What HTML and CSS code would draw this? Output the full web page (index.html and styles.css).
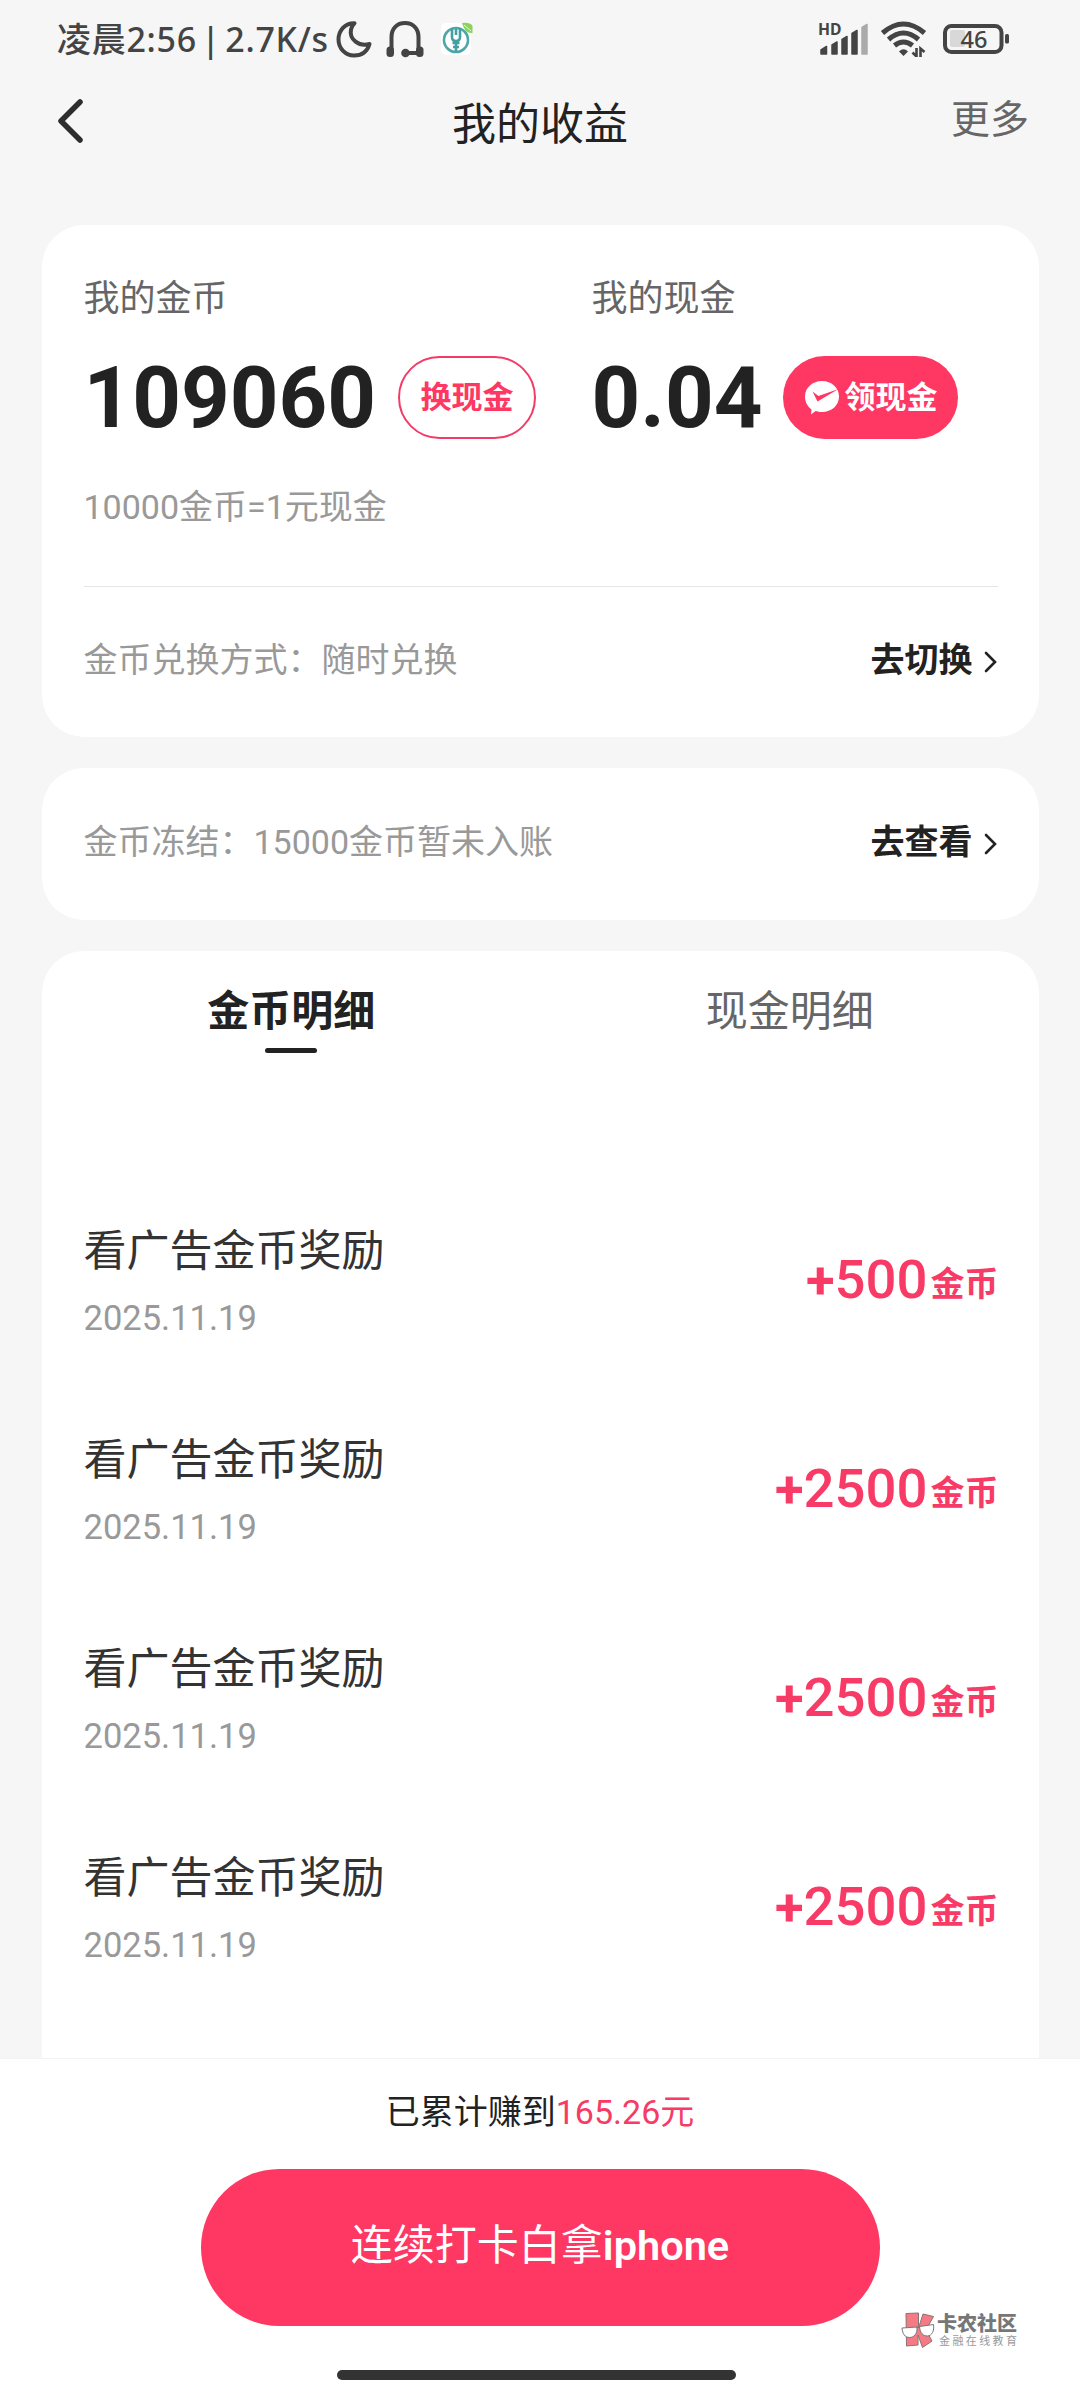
FILE: index.html
```html
<!DOCTYPE html>
<html lang="zh-CN">
<head>
<meta charset="utf-8">
<title>我的收益</title>
<link rel="stylesheet" href="styles.css">
</head>
<body>
<div class="screen">
  <div class="status">
    <span class="status-time">凌晨2:56 | 2.7K/s</span>
    <svg class="moon" width="36" height="38" viewBox="0 0 36 38"><path d="M18.500 3.200C9 3 2.500 10.500 2.500 19.500C2.500 28.500 9.500 35.500 18 35.500C26 35.500 31.500 31 33.500 24C23 27 13 19.500 15 9.500C15.500 7 16.500 5 18.500 3.200Z"/></svg>
    <svg class="headset" width="38" height="38" viewBox="0 0 38 38"><path class="line" d="M5.500 29V17C5.500 8.500 11 3 19 3S32.500 8.500 32.500 17V29M20 33H32"/><rect x="0.500" y="26.500" width="7.500" height="10.500" rx="3.500"/><rect x="30" y="26.500" width="7.500" height="10.500" rx="3.500"/><circle cx="19.500" cy="33" r="4.300"/></svg>
    <svg class="app" width="32" height="34" viewBox="0 0 32 34"><rect x="0" y="1" width="30" height="32" rx="5" fill="#fff"/><circle cx="15" cy="18" r="12" fill="none" stroke="#4fa7a8" stroke-width="2.600"/><path d="M15 19V30M11 6V15Q11 19 15 19Q19 19 19 15V6M15 7V13M11.500 21H18.500M12 25H18" fill="none" stroke="#459fa2" stroke-width="2.600"/><path d="M21 1Q29 0 31.500 4V11Q24 12 21 1Z" fill="#8bd35c"/><path d="M23 3L30 9" stroke="#e8f8dc" stroke-width="1"/></svg>
    <span class="status-gap"></span>
    <svg class="signal" width="53" height="52" viewBox="-1 -9 53 52"><text x="0" y="12.500" font-size="16" textLength="23.500" lengthAdjust="spacingAndGlyphs">HD</text><path d="M3 28L8.500 24.500V32H3ZM14 23L19 20V32H14ZM24 17.500L29 14.500V32H24ZM34 11.500L39 8.500V32H34Z"/><path class="dim" d="M44 5.500L49 2.500V32H44Z"/></svg>
    <svg class="wifi" width="48" height="36" viewBox="0 0 48 36"><path class="arc" d="M2.500 12Q23.500 -6 44.500 12M8.500 18.500Q23.500 5.500 38.500 18.500M14.500 24.500Q23.500 17.500 32.500 24.500"/><path d="M19 30.500Q23.500 26 28 30.500L23.500 35Z"/><path class="arrows" d="M36.500 27V35.500L32.500 31.500M40.500 36V27.500L44.500 31"/></svg>
    <svg class="battery" width="68" height="32" viewBox="0 0 68 32"><rect x="7" y="7" width="15" height="17" rx="2" fill="#d8d8d8"/><rect x="2" y="3" width="56.500" height="26" rx="6.500" fill="none" stroke="#444" stroke-width="4"/><rect x="62" y="11" width="4" height="9.500" rx="1.500" fill="#444"/><text x="31" y="24.500" font-size="23.500" text-anchor="middle">46</text></svg>
  </div>

  <div class="header">
    <svg class="back" width="28" height="46" viewBox="0 0 28 46"><path d="M23 4L4 23L23 42"/></svg>
    <span class="title">我的收益</span>
    <span class="more">更多</span>
  </div>

  <div class="content">
    <div class="card summary">
      <div class="balances">
        <div class="balance coin">
          <div class="label">我的金币</div>
          <div class="figure"><span class="number">109060</span><span class="pill outline">换现金</span></div>
          <div class="rate">10000金币=1元现金</div>
        </div>
        <div class="balance">
          <div class="label">我的现金</div>
          <div class="figure"><span class="number">0.04</span><span class="pill filled"><svg width="36" height="36" viewBox="0 0 36 36"><path d="M18 1C27.500 1 35 7.500 35 16.500C35 25.500 27.500 32 18 32C15.500 32 13.500 31.500 11.500 31L7 34.500L7.500 29.500C3.500 26.500 1 22 1 16.500C1 7.500 8.500 1 18 1Z" fill="#fff"/><path d="M8.500 11.500L14.500 16L34.500 9L13.500 21.500Z" fill="#ff3763"/></svg>领现金</span></div>
        </div>
      </div>
      <div class="row mode">
        <span>金币兑换方式：随时兑换</span>
        <span class="link">去切换<svg width="14" height="22" viewBox="0 0 14 22"><path d="M2 2L11 11L2 20"/></svg></span>
      </div>
    </div>

    <div class="card row frozen">
      <span>金币冻结：15000金币暂未入账</span>
      <span class="link">去查看<svg width="14" height="22" viewBox="0 0 14 22"><path d="M2 2L11 11L2 20"/></svg></span>
    </div>

    <div class="card details">
      <div class="tabs">
        <div class="tab active">金币明细</div>
        <div class="tab">现金明细</div>
      </div>
      <div class="item"><div><div class="item-name">看广告金币奖励</div><div class="item-date">2025.11.19</div></div><div class="amount"><b>+</b>500<small>金币</small></div></div>
      <div class="item"><div><div class="item-name">看广告金币奖励</div><div class="item-date">2025.11.19</div></div><div class="amount"><b>+</b>2500<small>金币</small></div></div>
      <div class="item"><div><div class="item-name">看广告金币奖励</div><div class="item-date">2025.11.19</div></div><div class="amount"><b>+</b>2500<small>金币</small></div></div>
      <div class="item"><div><div class="item-name">看广告金币奖励</div><div class="item-date">2025.11.19</div></div><div class="amount"><b>+</b>2500<small>金币</small></div></div>
    </div>
  </div>

  <div class="footer">
    <div class="total">已累计赚到<span>165.26元</span></div>
    <div class="cta">连续打卡白拿<b>iphone</b></div>
    <div class="home-bar"></div>
  </div>

  <div class="watermark">
    <svg width="34" height="37" viewBox="0 0 34 37"><g fill="#f47b86" stroke="#8b7275" stroke-width="1"><path d="M5 1.500L17.500 1V16L22 2L32.500 4.500L25 18L31 29L21.500 35.500L17 23V33L5.500 34Z"/></g><path d="M1 16L16 15C16.500 22 13 25.500 8.500 25.500C4 25.500 1.500 22 1 16ZM18.500 14.500L32.500 12.500C33.500 19 31 23.500 26.500 24C22 24 19 21 18.500 14.500Z" fill="#fff" stroke="#777" stroke-width="1"/><path d="M15 16Q17 14 19 15.500" fill="none" stroke="#777"/></svg>
    <div><div class="wm-name">卡农社区</div><div class="wm-sub">金融在线教育</div></div>
  </div>
</div>
</body>
</html>
```
FILE: styles.css
```css
* { box-sizing: border-box; }
body {
  margin: 0;
  background: #f6f6f6;
  font-family: Roboto, "Noto Sans CJK SC", sans-serif;
  color: #222;
}
svg { display: block; flex: none; }
.screen {
  position: relative;
  display: flex;
  flex-direction: column;
  width: 1080px;
  height: 2400px;
  overflow: hidden;
}

/* status bar */
.status {
  display: flex;
  align-items: center;
  height: 78px;
  padding: 0 69px 0 57px;
  color: #444;
  font-family: "Noto Sans", "Noto Sans CJK SC", sans-serif;
}
.status-time {
  width: 279px;
  font-size: 34px;
  font-weight: 500;
  line-height: 78px;
  letter-spacing: 0.7px;
  word-spacing: -5px;
  white-space: nowrap;
}
.status text { fill: #444; font-weight: 500; }
.moon { fill: none; stroke: #444; stroke-width: 4; stroke-linejoin: round; }
.headset { margin-left: 14px; fill: #444; }
.headset .line { fill: none; stroke: #444; stroke-width: 4; }
.app { margin-left: 17px; }
.status-gap { flex: 1; }
.signal { fill: #444; stroke: #444; stroke-width: 1.5; stroke-linejoin: round; }
.signal text { stroke: none; font-weight: 700; }
.signal .dim { fill: #aaa; stroke: #aaa; }
.wifi { margin-left: 10px; fill: #444; }
.wifi .arc { fill: none; stroke: #444; stroke-width: 5; }
.wifi .arrows { fill: none; stroke: #444; stroke-width: 2.6; }
.battery { margin-left: 15px; }

/* title bar */
.header {
  display: grid;
  grid-template-columns: 1fr auto 1fr;
  align-items: center;
  height: 94px;
  padding: 0 51px 0 57px;
}
.back { margin-bottom: 8px; fill: none; stroke: #2d2d2d; stroke-width: 5.5; stroke-linecap: round; stroke-linejoin: round; }
.title { margin-right: 6px; font-size: 44px; line-height: 60px; }
.more { margin-bottom: 11px; justify-self: end; font-size: 39px; line-height: 50px; color: #666; }

.content {
  flex: 1;
  display: flex;
  flex-direction: column;
  gap: 31px;
  min-height: 0;
  padding: 53px 41.5px 0;
  overflow: hidden;
}
.card { flex: none; border-radius: 42px; background: #fff; }

/* balances */
.summary { height: 512px; padding: 48px 41px 0 42px; }
.balances {
  display: flex;
  height: 314px;
  border-bottom: 1px solid #e5e5e5;
}
.coin { width: 508px; }
.label { font-size: 36px; line-height: 52px; color: #666; }
.figure { display: flex; align-items: center; height: 84px; margin: 31px 0 42px; }
.number { font-size: 85px; font-weight: 700; line-height: 84px; }
.pill {
  display: flex;
  align-items: center;
  justify-content: center;
  height: 83px;
  margin: 0 0 1px 22px;
  border-radius: 42px;
  font-size: 31px;
  font-weight: 700;
  line-height: 50px;
}
.outline { width: 138px; border: 2px solid #f23b67; color: #ff3763; }
.filled { width: 175px; margin-left: 21px; gap: 4px; background: #ff3763; color: #fff; }
.rate { font-size: 34px; line-height: 50px; color: #999; }

.row {
  display: flex;
  align-items: center;
  justify-content: space-between;
  font-size: 34px;
  line-height: 50px;
  color: #999;
}
.mode { height: 145px; }
.frozen { height: 152px; padding: 0 41px 4px 42px; }
.link { display: flex; align-items: center; gap: 11px; font-weight: 700; color: #222; }
.link svg { margin-top: 4px; fill: none; stroke: #222; stroke-width: 2.6; stroke-linecap: round; }

/* details */
.details { height: 1200px; padding-top: 30px; }
.tabs { display: grid; grid-template-columns: 1fr 1fr; height: 196px; }
.tab { padding-left: 1px; font-size: 42px; line-height: 61px; text-align: center; color: #666; }
.active { font-weight: 700; color: #222; }
.active::after {
  content: "";
  display: block;
  width: 52px;
  height: 5px;
  margin: 6px auto 0;
  border-radius: 3px;
  background: #222;
}
.item {
  display: flex;
  align-items: center;
  justify-content: space-between;
  height: 209px;
  padding: 0 40px 0 42px;
}
.item-name { font-size: 43px; line-height: 60px; color: #333; }
.item-date { margin-top: 12px; font-size: 34.5px; line-height: 50px; color: #999; }
.amount { padding-bottom: 5px; font-size: 54.5px; font-weight: 500; line-height: 60px; color: #f73a66; }
.amount b { font-size: 52.5px; font-weight: 700; }
.amount small { position: relative; top: -1.5px; margin-left: 3px; font-size: 34px; font-weight: 700; line-height: 1; }

/* bottom bar */
.footer {
  display: flex;
  flex-direction: column;
  align-items: center;
  height: 342px;
  padding-top: 29px;
  border-top: 1px solid #f3f3f3;
  background: #fff;
}
.total { font-size: 34px; line-height: 48px; padding-bottom: 2px; }
.total span { color: #f73a66; }
.cta {
  width: 679px;
  height: 157px;
  margin-top: 31px;
  border-radius: 79px;
  background: #ff3763;
  color: #fff;
  font-size: 42px;
  line-height: 154px;
  text-align: center;
}
.cta b { font-weight: 600; font-size: 41.5px; }
.home-bar { width: 399px; height: 10px; margin: 44px 7px 0 0; border-radius: 5px; background: #333; }

.watermark { position: absolute; left: 901px; top: 2312px; display: flex; gap: 2px; }
.wm-name { font-size: 20px; font-weight: 900; line-height: 24px; color: #777; white-space: nowrap; }
.wm-sub { padding-left: 2px; font-size: 11px; line-height: 12px; letter-spacing: 2.4px; color: #999; white-space: nowrap; }
```
